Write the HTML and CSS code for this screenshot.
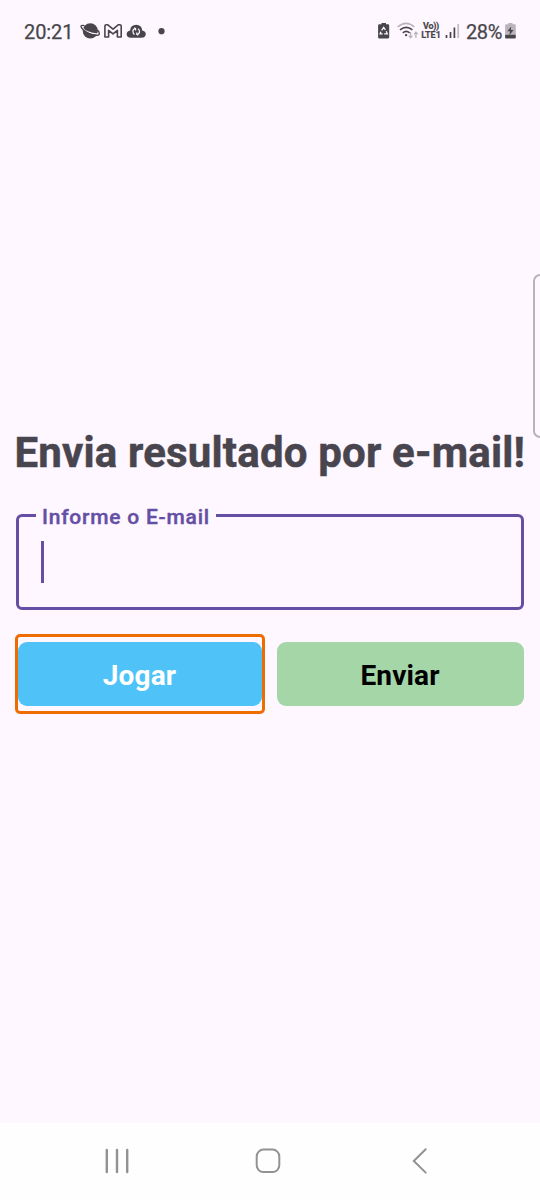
FILE: index.html
```html
<!DOCTYPE html>
<html lang="pt-BR">
<head>
<meta charset="utf-8">
<title>Envia resultado</title>
<link rel="stylesheet" href="styles.css">
</head>
<body>
<div class="screen">
  <header class="status">
    <span class="clock">20:21</span>
    <svg class="notifications" width="92" height="24" viewBox="78 20 92 24">
      <circle cx="90.300" cy="30.800" r="7.600" fill="#48464b"/>
      <path d="M82 27.200C84 31 92 34.600 98.500 33.800" fill="none" stroke="#fef7ff" stroke-width="1.300"/>
      <path d="M84.500 25.600C80.500 24.500 79.800 26.500 83 29.500C87 33 93 35.500 97.200 35.300C100.500 35 99.500 32 97.500 30" fill="none" stroke="#48464b" stroke-width="1.300"/>
      <path d="M104.900 37V26.100Q104.900 24.700 106.300 24.700H107.500L113 29.200L118.500 24.700H119.800Q121.200 24.700 121.200 26.100V37H117.400V30.300L113 33.900L108.600 30.300V37Z" fill="none" stroke="#48464b" stroke-width="1.600" stroke-linejoin="round"/>
      <path d="M131 37.700Q126.600 37.500 126.600 34Q126.800 31 130.100 30.500Q130.500 24.800 136.200 24.700Q141.700 24.800 142.200 30.500Q145.700 31 145.800 34.100Q145.600 37.700 141.600 37.700Z" fill="#48464b"/>
      <path d="M135.200 28.600Q132.800 29.200 132.900 31.600Q133 33.700 134.500 34.400M137.200 34.600Q139.600 34 139.500 31.600Q139.400 29.500 137.900 28.800M134.200 27.800L135.600 28.600V30.600M138.200 35.200L136.800 34.500V32.600" fill="none" stroke="#fef7ff" stroke-width="1.200"/>
      <circle cx="161.500" cy="31.200" r="3.100" fill="#48464b"/>
    </svg>
    <svg class="network" width="44" height="24" viewBox="376 20 44 24">
      <path d="M381.500 23H386V24.300H388Q389.200 24.300 389.200 25.500V37.200Q389.200 38.500 388 38.500H379.300Q378.100 38.500 378.100 37.200V25.500Q378.100 24.300 379.300 24.300H381.500Z" fill="#48464b"/>
      <path d="M381.600 30.300L383.700 27.400L385.400 29.800M386.200 31.200L387.300 33.800H384.200M382.700 33.800H380.100L380.900 31.700" fill="none" stroke="#fef7ff" stroke-width="1.300"/>
      <path d="M397.700 26.900Q406 19.700 414.400 26.900" fill="none" stroke="#b9b3bb" stroke-width="1.600"/>
      <path d="M400 29.900Q406.200 24.700 412.400 29.900M402.800 32.800Q406.200 30 409.600 32.800" fill="none" stroke="#48464b" stroke-width="1.600"/>
      <circle cx="406.100" cy="35.100" r="1.200" fill="#48464b"/>
      <path d="M410.600 32V37.600M408.800 35.800L410.600 37.700L412.400 35.800M415.900 38V32.400M414.100 34.200L415.900 32.300L417.700 34.200" fill="none" stroke="#b9b3bb" stroke-width="1.300"/>
    </svg>
    <span class="lte"><span class="vo">Vo))</span><span>LTE1</span></span>
    <svg class="signal" width="16" height="20" viewBox="443 22 16 20">
      <path d="M445.500 35V38M449.500 32V38M453.400 27.500V38" stroke="#48464b" stroke-width="1.700"/>
      <path d="M457.200 24V38" stroke="#c1bbc3" stroke-width="1.700"/>
    </svg>
    <span class="percent">28%</span>
    <svg class="battery" width="14" height="20" viewBox="504 22 14 20">
      <path d="M508.300 23H512.500V24.300H514.700Q515.800 24.300 515.800 25.400V34H505.100V25.400Q505.100 24.300 506.200 24.300H508.300Z" fill="#bab4bd"/>
      <path d="M505.100 34.500H515.800V37.300Q515.800 38.500 514.700 38.500H506.200Q505.100 38.500 505.100 37.300Z" fill="#48464b"/>
      <path d="M511.200 26.500L507.300 31.300H510L509.400 35.300L513.600 30.100H510.900Z" fill="#48464b"/>
    </svg>
  </header>

  <aside class="edge-handle"></aside>

  <main class="content">
    <h1 class="title">Envia resultado por e-mail!</h1>
    <fieldset class="field">
      <legend class="label">Informe o E-mail</legend>
      <div class="caret"></div>
    </fieldset>
    <div class="actions">
      <div class="focus"><button class="button play">Jogar</button></div>
      <button class="button send">Enviar</button>
    </div>
  </main>

  <nav class="navbar">
    <svg width="28" height="28" viewBox="103 1147 28 28"><path d="M106.800 1150V1172M117 1150V1172M127.200 1150V1172" stroke="#929292" stroke-width="2.400" stroke-linecap="round"/></svg>
    <svg width="28" height="28" viewBox="254 1147 28 28"><rect x="256.700" y="1149.600" width="22.600" height="22.500" rx="6.800" fill="none" stroke="#929292" stroke-width="2"/></svg>
    <svg width="28" height="28" viewBox="405 1147 28 28"><path d="M425.700 1149.300L413.800 1161L425.700 1172.600" fill="none" stroke="#929292" stroke-width="2" stroke-linecap="round"/></svg>
  </nav>
</div>
</body>
</html>
```
FILE: styles.css
```css
* { box-sizing: border-box; }
body { margin: 0; font-family: Roboto, sans-serif; }
.screen {
  position: relative;
  display: flex;
  flex-direction: column;
  width: 540px;
  height: 1200px;
  overflow: hidden;
  background: #fef7ff;
}
.status {
  display: flex;
  align-items: center;
  height: 62px;
  padding: 2px 20px 0 24px;
  color: #48464b;
}
.status > * { flex: none; }
.clock, .percent {
  font-size: 20px;
  line-height: 24px;
  letter-spacing: -0.1px;
  white-space: nowrap;
  -webkit-text-stroke: 0.25px #48464b;
  margin-top: -1px;
}
.clock { width: 54px; }
.network { margin-left: 206px; }
.lte {
  display: flex;
  flex-direction: column;
  align-items: center;
  width: 20px;
  margin: -2px 3px 0 1px;
  font-size: 9px;
  font-weight: 700;
  line-height: 9px;
  -webkit-text-stroke: 0.2px #48464b;
}
.vo { letter-spacing: -0.3px; }
.percent { width: 38px; margin-left: 6px; margin-right: 1px; letter-spacing: -0.4px; }
.battery { margin-left: -1px; }
.edge-handle {
  position: absolute;
  top: 274px;
  right: -10px;
  width: 17px;
  height: 164px;
  border: 2px solid #b8b3bb;
  border-radius: 7px;
}
.content { flex: 1; padding: 366px 14px 0 15px; }
.title {
  margin: 0 0 0 -0.5px;
  font-size: 42px;
  line-height: 50px;
  font-weight: 700;
  letter-spacing: 0.18px;
  color: #48454e;
  -webkit-text-stroke: 0.5px #48454e;
  white-space: nowrap;
}
.field {
  height: 108px;
  margin: 24px 2px 0 1px;
  padding: 0 0 0 22px;
  border: 3px solid #654fa4;
  border-radius: 6px;
  min-width: 0;
}
.label {
  margin-left: -5px;
  padding: 3px 6px 0 6px;
  color: #654fa4;
  font-size: 21px;
  line-height: 24px;
  font-weight: 500;
  letter-spacing: 0.77px;
  -webkit-text-stroke: 0.4px #654fa4;
}
.caret { width: 3px; height: 42px; margin-top: 12px; background: #654fa4; }
.actions {
  display: grid;
  grid-template-columns: 250px 247px;
  column-gap: 12px;
  align-items: center;
  margin-top: 24px;
}
.focus {
  height: 80px;
  padding: 5px 0;
  border: 3px solid #ef6c00;
  border-radius: 5px;
}
.button {
  display: block;
  width: 100%;
  height: 64px;
  padding: 4px 1px 0 0;
  border: 0;
  border-radius: 9px;
  font: 700 28px/32px Roboto, sans-serif;
  letter-spacing: 0.15px;
}
.play { color: #fff; background: #4fc3f7; }
.send { color: #000; background: #a5d6a7; }
.navbar {
  display: flex;
  gap: 123px;
  height: 77px;
  padding: 24px 0 0 103px;
  background: #fefefe;
}
```
